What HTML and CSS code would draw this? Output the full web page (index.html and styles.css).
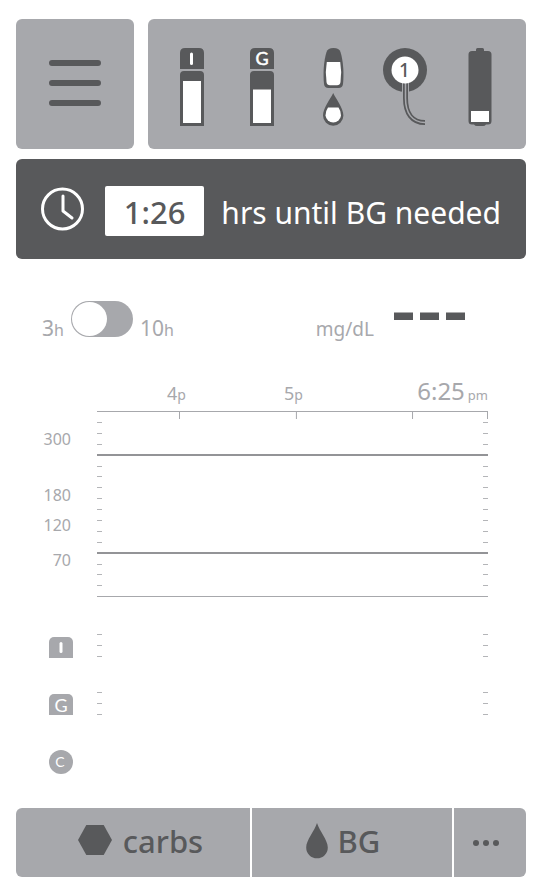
FILE: index.html
```html
<!DOCTYPE html>
<html lang="en">
<head>
<meta charset="utf-8">
<meta name="viewport" content="width=device-width, initial-scale=1">
<title>Pump home</title>
<link rel="stylesheet" href="styles.css">
</head>
<body>
<header class="top">
  <button class="menu" type="button" aria-label="Menu">
    <svg width="54" height="48" viewBox="0 0 54 48"><path d="M4 3H50M4 23H50M4 43H50" stroke="#58595b" stroke-width="6" stroke-linecap="round"/></svg>
  </button>
  <div class="status">
    <svg width="44" height="78" viewBox="170 48 44 78" role="img" aria-label="Insulin cartridge">
      <path class="dark" d="M180 69V53Q180 48 185 48H199Q204 48 204 53V69ZM180 126V75Q180 71 184 71H200Q204 71 204 75V126Z"/>
      <path class="light" d="M183 81H201V123H183Z"/>
      <path d="M191.500 54V63.500" stroke="#fff" stroke-width="3" stroke-linecap="round"/>
    </svg>
    <svg width="44" height="78" viewBox="240 48 44 78" role="img" aria-label="Glucagon cartridge">
      <path class="dark" d="M250 69V53Q250 48 255 48H269Q274 48 274 53V69ZM250 126V75Q250 71 254 71H270Q274 71 274 75V126Z"/>
      <path class="light" d="M253 89.500H271V123H253Z"/>
      <text class="letter" x="262" y="65" text-anchor="middle">G</text>
    </svg>
    <svg width="46" height="78" viewBox="310 48 46 78" role="img" aria-label="Meter and blood drop">
      <path class="dark" d="M333.500 48C337.500 48 339.500 49.500 340.500 52C343.500 62 344 74 343 84Q342.500 88 338.500 88H328.500Q324.500 88 324 84C323 74 323.500 62 326.500 52C327.500 49.500 329.500 48 333.500 48Z"/>
      <path class="light" d="M326.800 62H340.200Q342 72 340.500 82Q340 85.300 337 85.300H330Q327 85.300 326.500 82Q325 72 326.800 62Z"/>
      <path class="dark" d="M333.200 93C336 99 343.400 108 343.400 115.500A10.200 10.200 0 0 1 323 115.500C323 108 330.400 99 333.200 93Z"/>
      <path class="light" d="M328 107.500H338.500Q341 111 341 115.500A7.800 7.800 0 0 1 325.500 115.500Q325.500 111 328 107.500Z"/>
    </svg>
    <svg width="46" height="78" viewBox="382 48 46 78" role="img" aria-label="Sensor 1">
      <circle class="dark" cx="405" cy="70" r="22"/>
      <path d="M405.500 80V98C405.500 113 412 122.500 425 122.500" fill="none" stroke="#a7a8ac" stroke-width="7"/>
      <path d="M405.500 80V98C405.500 113 412 122.500 425 122.500" fill="none" stroke="#58595b" stroke-width="5"/>
      <path d="M405.500 80V98C405.500 113 412 122.500 425 122.500" fill="none" stroke="#a7a8ac" stroke-width="1.500"/>
      <circle class="light" cx="405" cy="70" r="13.500"/>
      <text class="channel" x="404.500" y="77" text-anchor="middle">1</text>
    </svg>
    <svg width="51" height="78" viewBox="454 48 51 78" role="img" aria-label="Battery low">
      <path class="dark" d="M476 51V49.500Q476 48 477.500 48H482.500Q484 48 484 49.500V51H488Q491.500 51 491.500 54.500V121Q491.500 124.500 488 124.500H486Q485 126 483 126H477Q475 126 474 124.500H472Q468.500 124.500 468.500 121V54.500Q468.500 51 472 51Z"/>
      <path class="light" d="M471 111H489V122H471Z"/>
    </svg>
  </div>
</header>

<main>
  <section class="banner">
    <svg width="44" height="44" viewBox="0 0 44 44" aria-hidden="true" fill="none" stroke="#fff" stroke-width="3" stroke-linecap="round" stroke-linejoin="round"><circle cx="21.500" cy="22" r="20"/><path d="M22 9V24L31 31"/></svg>
    <span class="countdown">1:26</span>
    <span class="message">hrs until BG needed</span>
  </section>

  <section class="controls">
    <label class="range" for="range">3<small>h</small></label>
    <input class="toggle" id="range" type="checkbox" role="switch">
    <label class="range" for="range">10<small>h</small></label>
    <span class="unit">mg/dL</span>
    <svg width="72" height="24" viewBox="0 0 72 24" role="img" aria-label="No reading"><path class="dark" d="M0 .5H19V8H0ZM26 .5H45V8H26ZM52 .5H71V8H52Z"/></svg>
  </section>

  <section class="axis">
    <span class="hour">4<small>p</small></span>
    <div class="axis-end">
      <span class="hour">5<small>p</small></span>
      <time class="now">6:25 <small>pm</small></time>
    </div>
  </section>

  <section class="chart">
    <div class="scale">
      <span class="level level-300">300</span>
      <span class="level level-180">180</span>
      <span class="level level-120">120</span>
      <span class="level level-70">70</span>
      <span class="badge badge-i"><svg width="24" height="21" viewBox="0 0 24 21" role="img" aria-label="Insulin"><path d="M12 6.500V14.500" stroke="#fff" stroke-width="3" stroke-linecap="round"/></svg></span>
      <span class="badge badge-g">G</span>
      <span class="badge badge-c">C</span>
    </div>
    <svg class="plot" role="img" aria-label="Glucose graph, no data">
      <defs>
        <path id="ticks" d="M0 11.500H5M0 22.500H5M0 33.500H5M0 55.500H5M0 65.500H5M0 76.500H5M0 87.500H5M0 98.500H5M0 109.500H5M0 120.500H5M0 131.500H5M0 153.500H5M0 163.500H5M0 174.500H5M0 223.500H5M0 234.500H5M0 245.500H5M0 281.500H5M0 292.500H5M0 303.500H5"/>
        <path id="hour-mark" d="M0 1V8"/>
      </defs>
      <line class="edge" x1="0" x2="100%" y1=".5" y2=".5"/>
      <line class="limit" x1="0" x2="100%" y1="44" y2="44"/>
      <line class="limit" x1="0" x2="100%" y1="142" y2="142"/>
      <line class="edge" x1="0" x2="100%" y1="185.500" y2="185.500"/>
      <svg x="21.100%" overflow="visible"><use class="edge" href="#hour-mark"/></svg>
      <svg x="51%" overflow="visible"><use class="edge" href="#hour-mark"/></svg>
      <svg x="80.700%" overflow="visible"><use class="edge" href="#hour-mark"/></svg>
      <svg x="100%" overflow="visible"><use class="edge" href="#hour-mark" x="-.5"/><use class="tick" href="#ticks" x="-5"/></svg>
      <use class="tick" href="#ticks"/>
    </svg>
  </section>
</main>

<nav class="actions">
  <button class="action action-carbs" type="button">
    <svg width="36" height="32" viewBox="0 0 36 32" aria-hidden="true"><path class="dark" d="M9.300 0H26.700L35 15L26.700 30H9.300L1 15Z"/></svg>
    carbs
  </button>
  <button class="action action-bg" type="button">
    <svg width="22" height="36" viewBox="0 0 22 36" aria-hidden="true"><path class="dark" d="M11 0C13.500 8 21.800 17 21.800 24.500A10.800 10.800 0 0 1 .2 24.500C.2 17 8.500 8 11 0Z"/></svg>
    BG
  </button>
  <button class="action action-more" type="button" aria-label="More">
    <svg width="28" height="8" viewBox="0 0 28 8" aria-hidden="true"><circle class="dark" cx="4" cy="4" r="3"/><circle class="dark" cx="14" cy="4" r="3"/><circle class="dark" cx="24" cy="4" r="3"/></svg>
  </button>
</nav>
</body>
</html>
```
FILE: styles.css
```css
* {
  box-sizing: border-box;
}

body {
  margin: 0;
  padding: 19px 14px 11px 16px;
  background: #fff;
  color: #a7a8ac;
  font-family: "Noto Sans", "Open Sans", sans-serif;
}

svg {
  display: block;
  flex: none;
}

button {
  margin: 0;
  padding: 0;
  border: 0;
  background: #a7a8ac;
  color: #58595b;
  font-family: inherit;
}

.dark {
  fill: #58595b;
}

.light {
  fill: #fff;
}

.top {
  display: flex;
  gap: 14px;
  height: 130px;
}

.menu {
  display: flex;
  flex: 0 0 118px;
  align-items: center;
  justify-content: center;
  border-radius: 6px;
}

.status {
  display: flex;
  flex: 1;
  align-items: center;
  justify-content: space-between;
  padding: 6px 21px 0 22px;
  border-radius: 6px;
  background: #a7a8ac;
}

.letter {
  fill: #fff;
  stroke: #fff;
  stroke-width: 0.5px;
  font: 18px Lato, sans-serif;
}

.channel {
  fill: #58595b;
  font: 500 19px "Noto Sans", sans-serif;
}

.banner {
  display: flex;
  align-items: center;
  height: 100px;
  margin-top: 10px;
  padding: 0 25px;
  border-radius: 6px;
  background: #58595b;
  color: #fff;
  font-size: 30px;
  white-space: nowrap;
}

.countdown {
  width: 101px;
  margin: 4px 17px 0 20px;
  padding-top: 2px;
  border-radius: 2px;
  background: #fff;
  color: #58595b;
  font-size: 31px;
  font-weight: 500;
  line-height: 48px;
  text-align: center;
}

.message {
  margin-top: 6px;
}

.controls {
  display: flex;
  align-items: baseline;
  height: 40px;
  margin-top: 42px;
  padding: 0 60px 0 26px;
}

.range {
  font-size: 21px;
  line-height: 20px;
}

.range small {
  font-size: 16px;
}

.toggle {
  display: flex;
  width: 62px;
  height: 36px;
  margin: 0 7px;
  padding: 1px;
  border-radius: 18px;
  background: #a7a8ac;
  appearance: none;
}

.toggle::before {
  width: 35px;
  height: 34px;
  border-radius: 50%;
  background: #fff;
  content: "";
}

.toggle:checked {
  justify-content: flex-end;
}

.unit {
  margin: 0 20px 0 auto;
  font-size: 19px;
  line-height: 20px;
}

.axis {
  display: grid;
  grid-template-columns: 117fr 204fr;
  align-items: baseline;
  margin-top: 38px;
  padding: 0 38px 0 151px;
  line-height: 24px;
}

.axis-end {
  display: flex;
  align-items: baseline;
  justify-content: space-between;
}

.hour {
  font-size: 18px;
}

.hour small {
  font-size: 14px;
}

.now {
  display: flex;
  gap: 3px;
  align-items: baseline;
  font-size: 24px;
}

.now small {
  font-size: 13px;
}

.chart {
  display: flex;
  gap: 24px;
  margin-top: 4px;
  padding-right: 38px;
}

.scale {
  display: flex;
  flex: 0 0 57px;
  flex-direction: column;
  align-items: flex-end;
}

.level {
  padding-right: 2px;
  font-size: 16px;
  line-height: 20px;
}

.level-300 {
  margin-top: 18px;
}

.level-180 {
  margin-top: 36px;
}

.level-120 {
  margin-top: 10px;
}

.level-70 {
  margin-top: 15px;
}

.badge {
  width: 24px;
  height: 21px;
  border-radius: 5px 5px 0 0;
  background: #a7a8ac;
  color: #fff;
  font: 18px/22px Lato, sans-serif;
  text-align: center;
}

.badge-i {
  margin-top: 67px;
}

.badge-g {
  margin-top: 36px;
}

.badge-c {
  height: 24px;
  margin-top: 35px;
  padding-right: 2px;
  border-radius: 50%;
  font-size: 14px;
  line-height: 24px;
}

.plot {
  flex: 1;
  height: 310px;
  min-width: 0;
}

.edge {
  stroke: #a7a8ac;
}

.limit {
  stroke: #939497;
  stroke-width: 2px;
}

.tick {
  stroke: #b4b5b8;
}

.actions {
  display: grid;
  grid-template-columns: 234fr 200fr 72fr;
  gap: 2px;
  height: 69px;
  margin-top: 34px;
}

.action {
  display: flex;
  gap: 10px;
  align-items: center;
  justify-content: center;
  font-size: 31px;
  font-weight: 500;
}

.action-carbs {
  padding: 0 0 4px 14px;
  border-radius: 6px 0 0 6px;
}

.action-bg {
  padding-right: 18px;
  padding-bottom: 4px;
}

.action-more {
  padding-right: 8px;
  border-radius: 0 6px 6px 0;
}
```
